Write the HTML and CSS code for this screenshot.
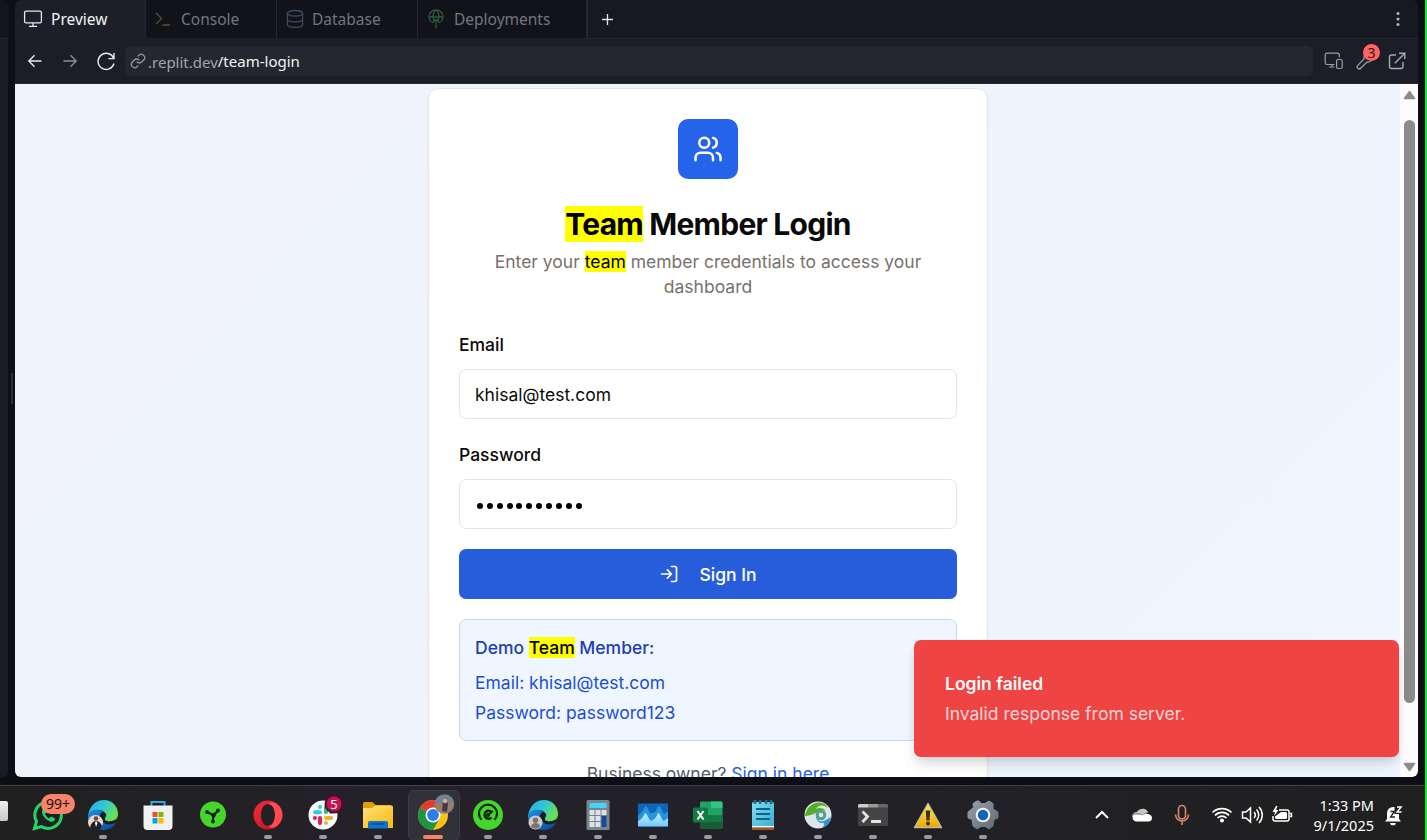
FILE: index.html
```
<!DOCTYPE html>
<html lang="en">
<head>
<meta charset="utf-8">
<title>Team Member Login</title>
<link rel="stylesheet" href="styles.css">
</head>
<body>
<svg class="defs" width="0" height="0">
  <defs>
    <linearGradient id="edgeTop" x1="0" y1="0" x2="1" y2="0.5"><stop offset="0" stop-color="#2fa8e6"/><stop offset=".5" stop-color="#2fc6d8"/><stop offset="1" stop-color="#6be04f"/></linearGradient>
    <linearGradient id="edgeLow" x1="0" y1="0" x2="1" y2="1"><stop offset="0" stop-color="#1b8fe0"/><stop offset="1" stop-color="#0c479c"/></linearGradient>
    <linearGradient id="folder" x1="0" y1="0" x2="1" y2="1"><stop offset="0" stop-color="#ffe27a"/><stop offset="1" stop-color="#f9b80c"/></linearGradient>
    <linearGradient id="opera" x1="0" y1="0" x2="1" y2="1"><stop offset="0" stop-color="#ff2b3c"/><stop offset="1" stop-color="#b0101c"/></linearGradient>
    <linearGradient id="warn" x1="0" y1="0" x2="0" y2="1"><stop offset="0" stop-color="#fff04a"/><stop offset="1" stop-color="#eda600"/></linearGradient>
    <linearGradient id="gear" x1="0" y1="0" x2="1" y2="1"><stop offset="0" stop-color="#99a2aa"/><stop offset="1" stop-color="#5d676f"/></linearGradient>
    <linearGradient id="wave" x1="0" y1="0" x2="0" y2="1"><stop offset="0" stop-color="#c9f0ff"/><stop offset="1" stop-color="#6cc9fa"/></linearGradient>
    <linearGradient id="note" x1="0" y1="0" x2="1" y2="1"><stop offset="0" stop-color="#83dcf0"/><stop offset="1" stop-color="#35aad0"/></linearGradient>
    <g id="edge">
      <path d="M-15 4C-15-8-8-15 1-15C10-15 15-8 15-1C15 5 10 7 5 7C2 7 0 6 2 3C4-1 1-5-4-5C-10-5-14-1-15 4Z" fill="url(#edgeTop)"/>
      <path d="M-15 1C-13-5-8-6-4-5C1-4 3 0 1 3C-2 9 5 11 13 8C9 14 4 15 0 15C-9 15-15 9-15 1Z" fill="url(#edgeLow)"/>
      <path d="M-3 1C-3-3 1-4 3-1C4 1 1 3 2 5C4 7 9 7 14 4C13 7 8 9 4 8.500C0 8-3 5-3 1Z" fill="#181b24"/>
    </g>
    <rect id="dot" x="-4" y="20" width="8" height="4" rx="2" fill="#9b9b9f"/>
  </defs>
</svg>
<div class="desktop">
  <div class="workspace">
    <div class="side-pane"><div class="side-head"></div></div>
    <div class="gutter"><div class="handle"></div></div>
    <main class="pane">
      <nav class="tabs">
        <div class="tab tab-preview active">
          <svg width="20" height="20" viewBox="0 0 20 20" fill="none" stroke="#e4e7ee" stroke-width="1.3"><rect x="1.6" y="2.2" width="16.8" height="11.6" rx="1.4"/><path d="M10 14v3.2M6 17.4h8"/></svg>
          <span>Preview</span>
        </div>
        <div class="tab tab-console">
          <svg width="18" height="18" viewBox="0 0 18 18" fill="none" stroke="#57512f" stroke-width="1.3"><path d="M2 3l5.500 5.500L2 14M8.500 15h7.500"/></svg>
          <span>Console</span>
        </div>
        <div class="tab tab-database">
          <svg width="18" height="20" viewBox="0 0 18 20" fill="none" stroke="#3e4a5c" stroke-width="1.3"><ellipse cx="9" cy="4.300" rx="7.600" ry="2.800"/><path d="M1.400 4.300v11.200c0 1.700 3.400 2.900 7.600 2.900s7.600-1.200 7.600-2.900V4.300M1.400 10c0 1.700 3.400 2.900 7.600 2.900s7.600-1.200 7.600-2.900"/></svg>
          <span>Database</span>
        </div>
        <div class="tab tab-deploy">
          <svg width="16" height="20" viewBox="0 0 16 20" fill="none" stroke="#2c5a3a" stroke-width="1.300"><path d="M3.500 13.200a7 7 0 1 1 9 0M1 8h14M5.800 11.500C4 7 5.500 2.500 8 1c2.500 1.500 4 6 2.200 10.500M8 19.500V10M4.200 14L8 10.200 11.800 14"/></svg>
          <span>Deployments</span>
        </div>
        <div class="tab-rest">
          <svg width="13" height="13" viewBox="0 0 13 13" stroke="#e4e7ee" stroke-width="1.300"><path d="M6.500 1v11M1 6.500h11"/></svg>
          <svg class="more" width="6" height="18" viewBox="0 0 6 18" fill="#b4b8c2"><circle cx="3" cy="3.500" r="1.500"/><circle cx="3" cy="9" r="1.500"/><circle cx="3" cy="14.500" r="1.500"/></svg>
        </div>
      </nav>
      <div class="address">
        <svg width="16" height="16" viewBox="0 0 16 16" fill="none" stroke="#e8eaf0" stroke-width="1.400"><path d="M14.500 8H2M7.500 2.300L1.800 8l5.700 5.700"/></svg>
        <svg width="16" height="16" viewBox="0 0 16 16" fill="none" stroke="#898d98" stroke-width="1.400"><path d="M1.500 8H14M8.500 2.300L14.200 8l-5.700 5.700"/></svg>
        <svg width="20" height="20" viewBox="0 0 20 20" fill="none" stroke="#e8eaf0" stroke-width="1.400"><path d="M18 2v5.600h-5.600M17.700 7.300A8.100 8.100 0 1 0 18 12.500"/></svg>
        <div class="url">
          <svg width="16" height="16" viewBox="0 0 24 24" fill="none" stroke="#9599a4" stroke-width="1.900"><path d="M10 13a5 5 0 0 0 7.540.540l3-3a5 5 0 0 0-7.070-7.070l-1.720 1.710M14 11a5 5 0 0 0-7.540-.540l-3 3a5 5 0 0 0 7.070 7.070l1.710-1.710"/></svg>
          <span class="host">.replit.dev</span><span class="path">/team-login</span>
        </div>
        <div class="tools">
          <svg width="20" height="18" viewBox="0 0 20 18" fill="none" stroke="#9a9eaa" stroke-width="1.200"><path d="M10.500 12.500H3A1.800 1.800 0 0 1 1.200 10.700V3A1.800 1.800 0 0 1 3 1.200h10.500A1.800 1.800 0 0 1 15.300 3v2.500M5 15h5.500M8 12.500V15"/><rect x="12.600" y="7.500" width="5.600" height="9" rx="1.200"/></svg>
          <div class="wrench">
            <svg width="18" height="18" viewBox="0 0 18 18" fill="none" stroke="#9a9eaa" stroke-width="1.300"><path d="M8 7a4.500 4.500 0 0 1 5.800-5.300L11 4.500 13.500 7l2.800-2.800A4.500 4.500 0 0 1 11 10l-6.300 6.300a1.900 1.900 0 0 1-2.900-2.900Z"/></svg>
            <span class="count">3</span>
          </div>
          <svg width="18" height="18" viewBox="0 0 18 18" fill="none" stroke="#a6aab5" stroke-width="1.400"><path d="M8 3H3.500A2 2 0 0 0 1.500 5v9.500a2 2 0 0 0 2 2H13a2 2 0 0 0 2-2V10M11 1.200h5.800V7M16.800 1.200L6.800 11.200"/></svg>
        </div>
      </div>
      <div class="viewport">
        <div class="page">
          <section class="card">
            <div class="badge">
              <svg width="30" height="30" viewBox="0 0 24 24" fill="none" stroke="#fff" stroke-width="2" stroke-linecap="round" stroke-linejoin="round"><path d="M16 21v-2a4 4 0 0 0-4-4H6a4 4 0 0 0-4 4v2"/><circle cx="9" cy="7" r="4"/><path d="M22 21v-2a4 4 0 0 0-3-3.870M16 3.130a4 4 0 0 1 0 7.750"/></svg>
            </div>
            <h1 class="title"><mark>Team</mark> Member Login</h1>
            <p class="subtitle">Enter your <mark>team</mark> member credentials to access your dashboard</p>
            <div class="label">Email</div>
            <div class="input">khisal@test.com</div>
            <div class="label">Password</div>
            <div class="input dots"><i></i><i></i><i></i><i></i><i></i><i></i><i></i><i></i><i></i><i></i><i></i></div>
            <div class="button">
              <svg width="20" height="20" viewBox="0 0 24 24" fill="none" stroke="#fff" stroke-width="2" stroke-linecap="round" stroke-linejoin="round"><path d="M15 3h4a2 2 0 0 1 2 2v14a2 2 0 0 1-2 2h-4M10 17l5-5-5-5M15 12H3"/></svg>
              <span>Sign In</span>
            </div>
            <div class="demo">
              <p class="demo-title">Demo <mark>Team</mark> Member:</p>
              <p>Email: khisal@test.com</p>
              <p>Password: password123</p>
            </div>
            <p class="owner">Business owner? <a>Sign in here</a></p>
          </section>
        </div>
        <div class="scrollbar">
          <svg width="13" height="10" viewBox="0 0 13 10"><path d="M6.500 1.500L11.500 8.500H1.500Z" fill="#8b8b8b" stroke="#8b8b8b" stroke-width="1.500" stroke-linejoin="round"/></svg>
          <div class="thumb"></div>
          <svg class="down" width="13" height="10" viewBox="0 0 13 10"><path d="M6.500 8.500L11.500 1.500H1.500Z" fill="#8b8b8b" stroke="#8b8b8b" stroke-width="1.500" stroke-linejoin="round"/></svg>
        </div>
        <div class="toast">
          <div class="toast-title">Login failed</div>
          <div class="toast-text">Invalid response from server.</div>
        </div>
      </div>
    </main>
    <div class="right-edge"></div>
  </div>
  <footer class="taskbar">
    <div class="cut-icon"></div>
    <div class="apps">
      <div class="app"><svg viewBox="-27 -29 54 54"><path d="M-13.500 13.500L-11.500 6.500A13.300 13.300 0 1 1-6.500 11.600Z" fill="none" stroke="#25d366" stroke-width="3"/><path d="M-5-6C-8-3-4 4 2 6.500C5 7.500 7 6 7 3.500L3 1.500 1 3.500C-1 2.500-2 1-3-1L-1.500-3-3-6Z" fill="#25d366"/></svg><span class="unread">99+</span></div>
      <div class="app"><svg viewBox="-27 -29 54 54"><use href="#edge"/><circle cx="-7.500" cy="7.500" r="7.500" fill="#e9d9cd"/><path d="M-13 13C-12 8-10 6-7 6S-1 9-1 12A7.500 7.500 0 0 1-13 13Z" fill="#1d2028"/><path d="M-7 6l-1 2 1 4 1.500-4Z" fill="#fff"/><circle cx="-7" cy="3.500" r="2.300" fill="#6d4b3b"/><use href="#dot"/></svg></div>
      <div class="app"><svg viewBox="-27 -29 54 54"><path d="M-6.500-9v-4h13v4" fill="none" stroke="#29a9e8" stroke-width="2"/><path d="M-14.500-9.500h29V11a4 4 0 0 1-4 4h-21a4 4 0 0 1-4-4Z" fill="#f1f1f1"/><path d="M-5.500-3h5v5h-5Z" fill="#f25022"/><path d="M.500-3h5v5h-5Z" fill="#7fba00"/><path d="M-5.500 3h5v5.500h-5Z" fill="#00a4ef"/><path d="M.500 3h5v5.500h-5Z" fill="#ffb900"/></svg></div>
      <div class="app"><svg viewBox="-27 -29 54 54"><circle cy="-.500" r="13" fill="#45d62c"/><path d="M0 0L-6-3M0 0L5-4M0 0V6" stroke="#12240f" stroke-width="2"/><path d="M-4-2.500L0-1.500L5-4.500L2 2L0 5L-1.500 1Z" fill="#12240f"/><circle cx="-6" cy="-3" r="1.900" fill="#12240f"/><circle cx="5" cy="-4.500" r="1.900" fill="#12240f"/><circle cy="6.500" r="1.900" fill="#12240f"/></svg></div>
      <div class="app"><svg viewBox="-27 -29 54 54"><path fill-rule="evenodd" d="M0-14.500A14.500 14.500 0 1 0 0 14.500A14.500 14.500 0 1 0 0-14.500ZM0-11C4.500-11 7-6 7 0S4.500 11 0 11-7 6-7 0-4.500-11 0-11Z" fill="url(#opera)"/><path d="M0-11C5-16 14.500-9 14.500 0S5 16 0 11C4.500 11 7 6 7 0S4.500-11 0-11Z" fill="#ff4a50"/><use href="#dot"/></svg></div>
      <div class="app"><svg viewBox="-27 -29 54 54"><circle r="14.500" fill="#fafafa"/><g stroke-width="4" stroke-linecap="round"><path d="M-8-2.800H-3M-3-8V-7.900" stroke="#36c5f0"/><path d="M3-8V-3M8-3H8.100" stroke="#2eb67d"/><path d="M3 3H8M3 8V8.100" stroke="#ecb22e"/><path d="M-3 3V8M-8 3H-8.100" stroke="#e01e5a"/></g><circle cx="11" cy="-11" r="9.500" fill="#4a102a"/><circle cx="11" cy="-11" r="7.500" fill="#c4144d"/><use href="#dot"/></svg><span class="five">5</span></div>
      <div class="app"><svg viewBox="-27 -29 54 54"><path d="M-15-11.500a1.500 1.500 0 0 1 1.500-1.500h8l3 3H13v6h-28Z" fill="#dfa007"/><path d="M-15-7H-6L-3-9.500H13.500A1.500 1.500 0 0 1 15-8V13H-15Z" fill="url(#folder)"/><path d="M-10 13.500V8A2 2 0 0 1-8 6H8A2 2 0 0 1 10 8V13.500Z" fill="#0d73cf"/><path d="M-6.500 9H6.500" stroke="#084b8f" stroke-width="1.500"/><use href="#dot"/></svg></div>
      <div class="app current"><svg viewBox="-27 -29 54 54"><circle r="15" fill="#fbc116"/><path d="M0 0L-13-7.500A15 15 0 0 1 13-7.500H0Z" fill="#e33b2e"/><path d="M0 0L-13-7.500A15 15 0 0 0 0 15L6.500 3.800Z" fill="#229342"/><circle r="7.500" fill="#fff"/><circle r="5.900" fill="#2f7de9"/><circle cx="11.500" cy="-11" r="9.800" fill="#6e8496"/><path d="M2-8C6-14 14-8 20-14A9.800 9.800 0 0 1 4-5Z" fill="#a77b5a"/><path d="M10-15l3-2 2 6-1 8-5-1Z" fill="#403a48"/><circle cx="12" cy="-14" r="2.300" fill="#d7ad92"/><rect x="-10" y="20" width="20" height="4" rx="2" fill="#f5846a"/></svg></div>
      <div class="app"><svg viewBox="-27 -29 54 54"><circle r="15" fill="#44d62c"/><path d="M-6.500 4.800A9 9 0 1 1 6.500 4.800" fill="none" stroke="#10240d" stroke-width="2.200"/><path d="M3.500-3A4 4 0 1 0 3.500 2.500" fill="none" stroke="#10240d" stroke-width="2.400"/><circle cx="0" cy="0" r="2" fill="#10240d"/><path d="M0 0L5-4" stroke="#10240d" stroke-width="2"/><use href="#dot"/></svg></div>
      <div class="app"><svg viewBox="-27 -29 54 54"><use href="#edge"/><circle cx="-7.500" cy="7.500" r="7" fill="#cbc9c7"/><circle cx="-7.500" cy="5.300" r="2.700" fill="#77736f"/><path d="M-12 12a4.500 4 0 0 1 9 0A7 7 0 0 1-12 12Z" fill="#77736f"/><use href="#dot"/></svg></div>
      <div class="app"><svg viewBox="-27 -29 54 54"><rect x="-11.500" y="-15" width="23" height="30" rx="1.500" fill="#7b838b"/><rect x="-8.500" y="-12" width="17" height="5" fill="#3fd6f7"/><path d="M-8.500-5h5v5h-5ZM-2.500-5h5v5h-5ZM3.500-5h5v5h-5ZM-8.500 1h5v5h-5ZM-2.500 1h5v5h-5ZM-8.500 7h5v5h-5ZM-2.500 7h5v5h-5Z" fill="#dde2e8"/><path d="M3.500 1h5v11h-5Z" fill="#124b93"/><use href="#dot"/></svg></div>
      <div class="app"><svg viewBox="-27 -29 54 54"><rect x="-15" y="-11.500" width="30" height="23" rx="1" fill="#0f66b5"/><path d="M-15 1C-12-3-10-3-8-9C-5-9-5-5-3-2C0-2 2-1 5-9C8-9 9-4 11-1L15-4V11H-15Z" fill="#2494e0"/><path d="M-15 6C-11 4-10 2-8-2C-5-1-5 4-2 6C1 5 3 3 5-2C8-1 8 5 11 6L15 3V11.500H-15Z" fill="url(#wave)"/><use href="#dot"/></svg></div>
      <div class="app"><svg viewBox="-27 -29 54 54"><rect x="-8" y="-13.500" width="22.500" height="27" rx="1.500" fill="#21a366"/><path d="M3-13.500H13a1.500 1.500 0 0 1 1.500 1.500V-7H3Z" fill="#33c481"/><path d="M-8 0H14.500V7H-8Z" fill="#107c41"/><path d="M-8 7H14.500v5a1.500 1.500 0 0 1-1.500 1.500H-6.500A1.500 1.500 0 0 1-8 12Z" fill="#185c37"/><rect x="-15" y="-7.500" width="15" height="15" rx="1.500" fill="#107c41"/><path d="M-10.500-4L-4.500 4.500M-4.500-4L-10.500 4.500" stroke="#fff" stroke-width="2"/><use href="#dot"/></svg></div>
      <div class="app"><svg viewBox="-27 -29 54 54"><rect x="-11" y="-13" width="22" height="28" rx="1.500" fill="url(#note)"/><path d="M-11 11H11v1.500H-11Z" fill="#fff"/><path d="M-11 12.500H11V15H-11Z" fill="#a3541a"/><path d="M-7-6H7M-7-1H7M-7 4H7" stroke="#0c6385" stroke-width="2"/><path d="M-8-15v4M-3-15v4M3-15v4M8-15v4" stroke="#14708f" stroke-width="2.500"/><use href="#dot"/></svg></div>
      <div class="app"><svg viewBox="-27 -29 54 54"><circle r="13.500" fill="#dfe6ea"/><path d="M-13 1C-12-7-6-13 2-12.500C6-12 9-10 10-7C5-11 0-10-2-6C1-8 6-7 8-4C5-5 3-5 1-3C-3-2-8 1-13 1Z" fill="#56ad2b"/><path d="M-1-3C-3 3 1 8 6 6C8 5 11 3 13 2C12 8 8 12 4 12.800C7 10 7 8 4 8C0 8-4 3-1-3Z" fill="#2a93d8"/><circle cx="3" cy="0" r="3.800" fill="none" stroke="#4fa58a" stroke-width="3"/><use href="#dot"/></svg></div>
      <div class="app"><svg viewBox="-27 -29 54 54"><rect x="-15" y="-11" width="30" height="22" rx="1.500" fill="#444"/><path d="M-15-7.500V-9.500A1.500 1.500 0 0 1-13.500-11H-5V-7.500Z" fill="#cfcfcf"/><path d="M-5-11H5V-7.500H-5Z" fill="#9a9a9a"/><path d="M5-11H13.500A1.500 1.500 0 0 1 15-9.500V-7.500H5Z" fill="#6a6a6a"/><path d="M-10.500-3.500L-5.500 1.500L-10.500 7M-2 6.500H8" fill="none" stroke="#e6e6e6" stroke-width="2.800"/><use href="#dot"/></svg></div>
      <div class="app"><svg viewBox="-27 -29 54 54"><path d="M0-11.500L13.500 12.500H-13.500Z" fill="url(#warn)" stroke="#c2baa0" stroke-width="1.500" stroke-linejoin="round"/><path d="M-2.200-4.500h4.400L1.500 5.500h-3Z" fill="#33310f"/><circle cy="8.500" r="1.900" fill="#33310f"/><use href="#dot"/></svg></div>
      <div class="app"><svg viewBox="-27 -29 54 54"><path d="M-4-14H-6L-10-11.500L-9.500-7.500L-15-3V3L-11 4.500L-10 11L-6 14L-2 11.500H2L6 14L10 11L11 4.500L15 3V-3L10-6L10-11.500L6-14L2-11.500H-2Z" fill="url(#gear)" stroke="url(#gear)" stroke-linejoin="round"/><circle r="7.300" fill="#f2f4f6"/><circle r="5.200" fill="#0f63b8"/><use href="#dot"/></svg></div>
    </div>
    <div class="tray">
      <svg class="wide" viewBox="-20 -29 40 54"><path d="M-6 3L0-3L6 3" fill="none" stroke="#fff" stroke-width="2"/></svg>
      <svg class="wide" viewBox="-20 -29 40 54"><path d="M-10 2A4.500 4.500 0 0 1-5-3A6.500 6.500 0 0 1 6-3L0 4Z" fill="#9b9b9b"/><path d="M-6 6.500A4 4 0 0 1-8.500 0C-2-1 0 1 2 0C4-2 10-1 10 3A3.600 3.600 0 0 1 6.500 6.500Z" fill="#fff"/><path d="M-4-4A6 6 0 0 1 6-3C4-3 2-2 1 0C-1-1-3-3-7-2Z" fill="#c4c4c4"/></svg>
      <svg class="wide" viewBox="-20 -29 40 54" fill="none" stroke="#d8896b" stroke-width="1.600"><rect x="-3.500" y="-9.500" width="7" height="13.500" rx="3.500"/><path d="M-6.500-.500a6.500 6.500 0 0 0 13 0M0 6v4"/></svg>
      <svg class="wide" viewBox="-20 -29 40 54" fill="none" stroke="#fff" stroke-width="1.700"><path d="M-9.500-2.500a13.500 13.500 0 0 1 19 0M-7 .300a9.800 9.800 0 0 1 14 0M-4.400 3a6.200 6.200 0 0 1 8.800 0"/><circle cy="5.500" r="1.200" fill="#fff"/></svg>
      <svg class="narrow volume" viewBox="-15 -29 30 54" fill="none" stroke="#fff" stroke-width="1.500"><path d="M-9.500-3h3.500L-1.500-7V7L-6 3h-3.500ZM2-3a4.500 4.500 0 0 1 0 6M4.500-5.500a8 8 0 0 1 0 11M7-8a11.500 11.500 0 0 1 0 16"/></svg>
      <svg class="narrow" viewBox="-15 -29 30 54" fill="none" stroke="#fff" stroke-width="1.500"><path d="M-3-5H5A2 2 0 0 1 7-3V4A2 2 0 0 1 5 6H-7A2 2 0 0 1-9 4V1"/><path d="M8-1.500h1.500v3H8" /><path d="M-1-3H3.500A1.500 1.500 0 0 1 5-1.500V2.500A1.500 1.500 0 0 1 3.500 4H-5.500A1.500 1.500 0 0 1-7 2.500V1.500Z" fill="#fff" stroke="none"/><path d="M-6-9L-9.500-3H-7L-8 1L-3.500-5H-6L-4.500-9Z" fill="#fff" stroke="none"/></svg>
      <div class="clock"><span>1:33 PM</span><span>9/1/2025</span></div>
      <svg class="bell" viewBox="-17 -29 34 54"><path d="M-6 4V-2A6 6 0 0 1 0-8H1.500V-1H6V4L8 6.500H-8Z" fill="#fff"/><path d="M-2.800 8H2.800A2.800 2.300 0 0 1-2.800 8Z" fill="#fff"/><path d="M-2.500-3.500H1.500L-2.500 2H2" fill="none" stroke="#202022" stroke-width="1.300"/><path d="M4-8H8.200L4-3H8.500" fill="none" stroke="#fff" stroke-width="1.400"/></svg>
    </div>
  </footer>
  <div class="frame-line"></div>
</div>
</body>
</html>
```
FILE: styles.css
```
* { box-sizing: border-box; }
body { margin: 0; font-family: Inter, sans-serif; overflow: hidden; background: #0e0f16; }
p, h1 { margin: 0; }
svg { display: block; flex: none; }
.defs { position: absolute; }
.desktop { position: relative; display: flex; flex-direction: column; width: 1427px; height: 840px; }
.frame-line { position: absolute; top: 0; right: 0; width: 2px; height: 840px; background: #00f22e; }
.workspace { display: flex; height: 785px; padding-bottom: 8px; background: #0e0f16; }
.side-pane { width: 8px; background: #1b1d26; border-radius: 0 6px 6px 0; overflow: hidden; }
.side-head { height: 39px; background: #14151d; border-bottom: 1px solid #252833; }
.gutter { width: 7px; display: flex; align-items: flex-start; justify-content: center; }
.handle { width: 2px; height: 31px; margin-top: 373px; background: #2b2e39; }
.pane { width: 1403px; display: flex; flex-direction: column; }

.tabs { display: flex; height: 39px; font: 15.5px/20px "Noto Sans", sans-serif; color: #72757f; }
.tab { display: flex; align-items: center; background: #11121a; border-right: 1px solid #252832; border-bottom: 1px solid #1e2029; }
.tab-preview { width: 131px; padding-left: 8px; gap: 8px; }
.tab-console { width: 131px; padding-left: 8px; gap: 9px; }
.tab-database { width: 141px; padding-left: 9px; gap: 8px; }
.tab-deploy { width: 170px; padding-left: 10px; gap: 10px; border-right: 2px solid #252832; }
.tab.active { background: #1c1f27; color: #f2f4f8; border-bottom-color: #1c1f27; border-radius: 6px 0 0 0; }
.tab-rest { flex: 1; display: flex; align-items: center; padding: 0 17px 0 13px; background: #171820; border-bottom: 1px solid #252832; border-radius: 0 6px 0 0; }
.more { margin-left: auto; }

.address { display: flex; align-items: center; height: 45px; padding-left: 12px; background: #1b1e26; border-bottom: 1px solid #252832; }
.address > svg:nth-child(1) { margin-right: 19px; }
.address > svg:nth-child(2) { margin-right: 18px; }
.address > svg:nth-child(3) { margin-right: 9px; }
.url { display: flex; align-items: center; width: 1188px; height: 30px; padding-left: 5px; border-radius: 6px; background: #24272f; font: 15px/20px "Noto Sans", sans-serif; }
.url svg { margin-right: 2px; }
.host { color: #a0a4af; padding-top: 2px; }
.path { color: #f2f4f8; padding-bottom: 1px; }
.tools { display: flex; align-items: center; flex: 1; padding-left: 11px; gap: 13px; }
.wrench { position: relative; width: 18px; margin: 0 1px 0 -1px; }
.count { position: absolute; left: 7px; top: -8px; width: 17px; height: 17px; border-radius: 50%; background: #ff6464; color: #3a1015; font: 14px/17px "Noto Sans", sans-serif; text-align: center; }

.viewport { position: relative; display: flex; height: 693px; overflow: hidden; border-radius: 0 0 6px 6px; }
.page { width: 1385px; padding: 4px 0 0 413px; background: linear-gradient(135deg, #f0f4f8 0%, #eff4fd 50%, #eff6ff 100%); }
.card { width: 560px; height: 760px; padding: 30px; border: 1px solid #e5e5e5; border-radius: 10px; background: #fff; box-shadow: 0 1px 2px rgba(0,0,0,.05); font-size: 17.5px; line-height: 25px; color: #0a0a0a; }
mark { background: #ff0; color: #000; }
.badge { display: flex; align-items: center; justify-content: center; width: 60px; height: 60px; margin: 0 auto 30px; border-radius: 10px; background: #2563eb; }
.title { font-size: 30px; line-height: 30px; font-weight: 700; letter-spacing: -.75px; text-align: center; }
.subtitle { margin: 10px 0 33px; text-align: center; color: #78716c; }
.label { font-weight: 500; }
.input { display: flex; align-items: center; height: 50px; margin: 12px 0 23px; padding: 1px 15px 0; border: 1px solid #e5e5e5; border-radius: 7px; background: #fff; }
.dots { gap: 3.86px; margin-bottom: 20px; padding: 3px 17px 0; }
.dots i { width: 6px; height: 6px; border-radius: 50%; background: #000; }
.button { display: flex; align-items: center; justify-content: center; gap: 20px; height: 50px; margin-bottom: 20px; border-radius: 7px; background: #275dda; color: #fff; font-weight: 500; }
.demo { display: flex; flex-direction: column; gap: 5px; padding: 15px; border: 1px solid #bfdbfe; border-radius: 7px; background: #eff6ff; color: #1d4ed8; }
.demo-title { margin-bottom: 5px; font-weight: 500; color: #1e40af; }
.owner { margin-top: 20px; text-align: center; color: #525c69; }
.owner a { color: #2563eb; }

.scrollbar { display: flex; flex-direction: column; align-items: center; width: 18px; padding: 6px 0 5px; background: #fcfcfc; }
.thumb { width: 11px; height: 583px; margin-top: 20px; border-radius: 6px; background: #8b8b8b; }
.down { margin-top: auto; }
.toast { position: absolute; left: 899px; top: 556px; width: 485px; height: 117px; padding: 31px; border-radius: 7px; background: #ef4444; box-shadow: 0 10px 15px -3px rgba(0,0,0,.12), 0 4px 10px -2px rgba(0,0,0,.1); color: #fafafa; font-size: 17.5px; line-height: 25px; }
.toast-title { margin-bottom: 5px; font-weight: 600; }
.toast-text { color: #fdd6d6; }

.taskbar { display: flex; height: 55px; border-top: 1px solid #434248; background: linear-gradient(90deg, #202020, #25222a 30%, #222127 55%, #202021); }
.cut-icon { width: 8px; height: 20px; margin: 15px 12.5px 0 0; background: linear-gradient(#f0f0f0, #c8c8c8); border-radius: 0 2px 2px 0; }
.apps { display: flex; width: 990px; }
.app { position: relative; flex: 1; display: flex; justify-content: center; }
.app svg { width: 54px; height: 54px; position: relative; }
.current::before { content: ""; position: absolute; left: 2.5px; top: 4px; width: 50px; height: 49px; border: 1px solid #3d3b43; border-radius: 6px; background: #333138; }
.unread { position: absolute; left: 20.5px; top: 8px; width: 34px; height: 20px; border-radius: 10px; background: #f5846a; color: #201010; font: 14px/20px "Noto Sans", sans-serif; text-align: center; }
.five { position: absolute; left: 33.5px; top: 9px; width: 10px; font: 13px/18px "Noto Sans", sans-serif; text-align: center; color: #fff; }
.tray { display: flex; margin-left: 71.5px; }
.wide { width: 40px; height: 54px; }
.narrow { width: 30px; height: 54px; }
.volume { margin-left: -5px; }
.clock { display: flex; flex-direction: column; align-items: flex-end; width: 77px; padding-top: 9px; font: 14.5px/20px "Noto Sans", sans-serif; color: #fff; white-space: nowrap; }
.bell { width: 34px; height: 54px; margin-left: 2px; }
```
